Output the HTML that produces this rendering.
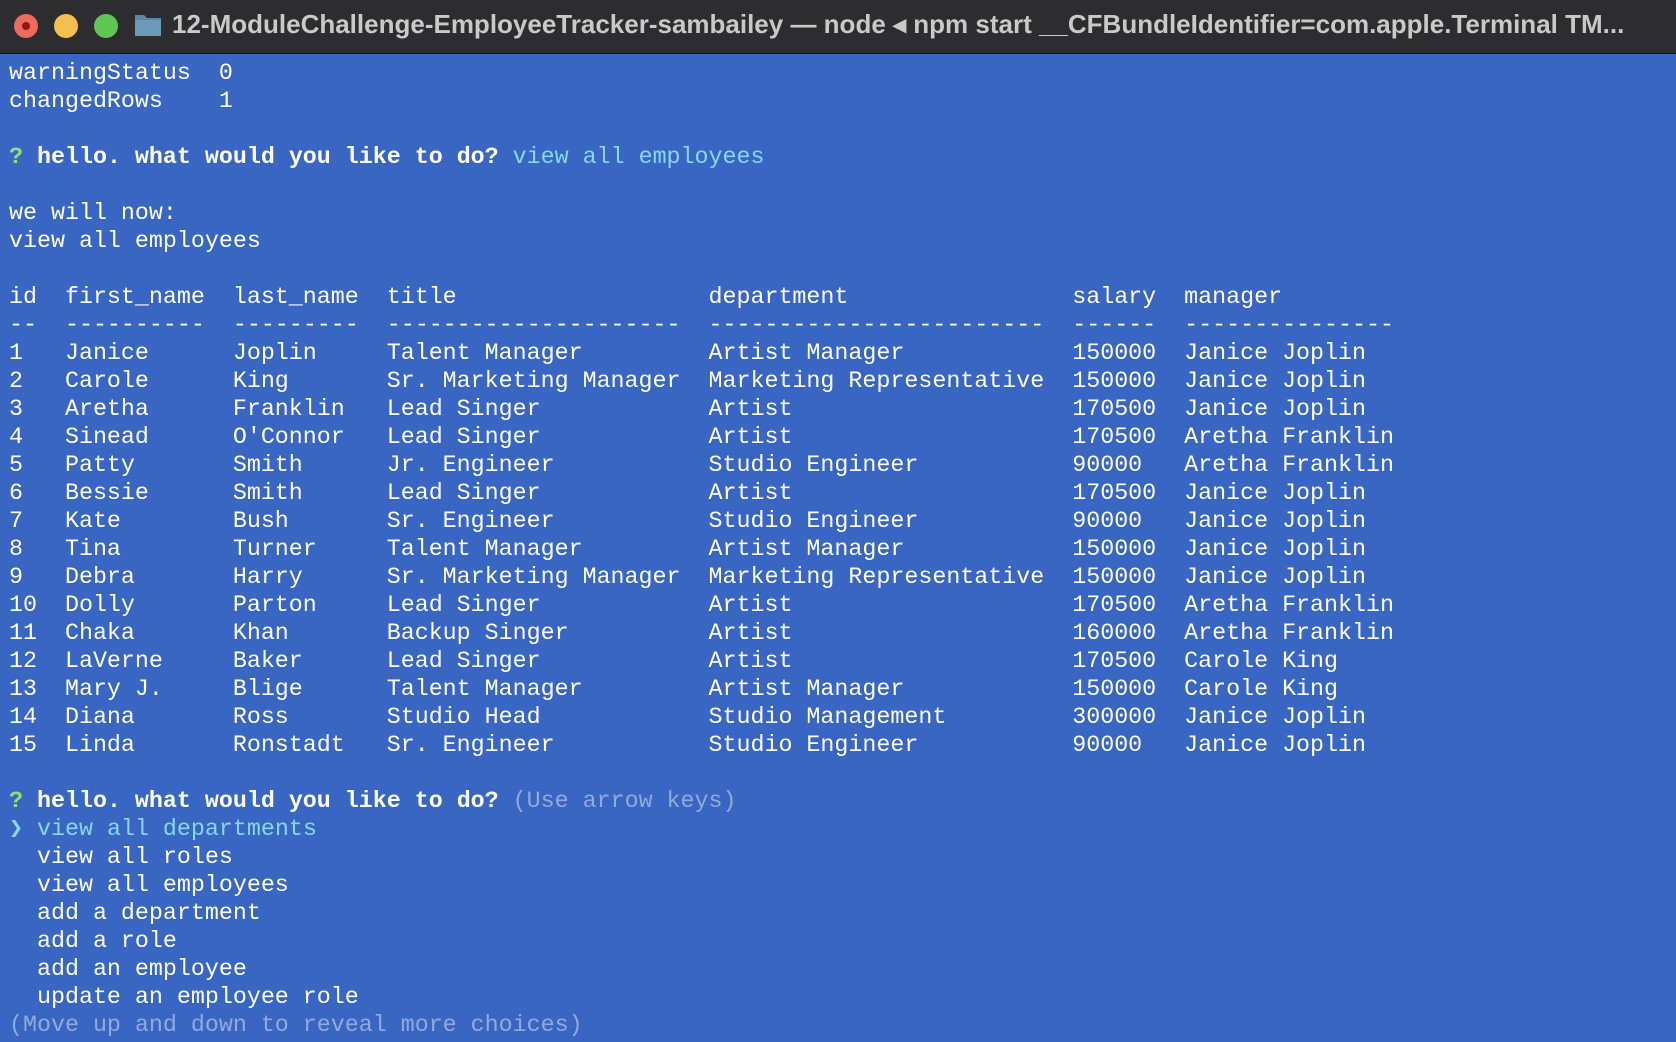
<!DOCTYPE html>
<html><head><meta charset="utf-8"><style>
html,body{margin:0;padding:0;width:1676px;height:1042px;overflow:hidden;background:#3966c3;}
.tb{position:absolute;left:0;top:0;width:1676px;height:53px;background:#2d2c2e;border-bottom:1px solid #111;}
.dot{position:absolute;top:14px;width:24px;height:24px;border-radius:50%;}
.title{position:absolute;left:172px;top:9px;font:bold 26px "Liberation Sans",sans-serif;color:#c9c9c9;white-space:nowrap;}
.folder{position:absolute;left:134px;top:12px;width:28px;height:25px;}
pre{position:absolute;left:9px;top:60px;margin:0;font:23.32px/28px "Liberation Mono","DejaVu Sans Mono",monospace;color:#fff;white-space:pre;}
.b{font-weight:bold}.g{color:#8fe07a}.c{color:#86d8e8}.d{color:#93a9dc}
</style></head><body>
<div class="tb">
<div class="dot" style="left:14px;background:#ec6a5e"><div style="position:absolute;left:8px;top:8px;width:8px;height:8px;border-radius:50%;background:#8c1a10"></div></div>
<div class="dot" style="left:54px;background:#f4bf4f"></div>
<div class="dot" style="left:94px;background:#61c554"></div>
<svg class="folder" viewBox="0 0 28 25"><path d="M1 3h9l3 3h14v18H1z" fill="#5d87a8"/><rect x="1" y="8" width="26" height="16" fill="#6e9ab9"/></svg>
<div class="title">12-ModuleChallenge-EmployeeTracker-sambailey — node ◂ npm start __CFBundleIdentifier=com.apple.Terminal TM...</div>
</div>
<pre>warningStatus  0
changedRows    1

<span class="g b">?</span> <span class="b">hello. what would you like to do?</span> <span class="c">view all employees</span>

we will now:
view all employees

id  first_name  last_name  title                  department                salary  manager
--  ----------  ---------  ---------------------  ------------------------  ------  ---------------
1   Janice      Joplin     Talent Manager         Artist Manager            150000  Janice Joplin
2   Carole      King       Sr. Marketing Manager  Marketing Representative  150000  Janice Joplin
3   Aretha      Franklin   Lead Singer            Artist                    170500  Janice Joplin
4   Sinead      O'Connor   Lead Singer            Artist                    170500  Aretha Franklin
5   Patty       Smith      Jr. Engineer           Studio Engineer           90000   Aretha Franklin
6   Bessie      Smith      Lead Singer            Artist                    170500  Janice Joplin
7   Kate        Bush       Sr. Engineer           Studio Engineer           90000   Janice Joplin
8   Tina        Turner     Talent Manager         Artist Manager            150000  Janice Joplin
9   Debra       Harry      Sr. Marketing Manager  Marketing Representative  150000  Janice Joplin
10  Dolly       Parton     Lead Singer            Artist                    170500  Aretha Franklin
11  Chaka       Khan       Backup Singer          Artist                    160000  Aretha Franklin
12  LaVerne     Baker      Lead Singer            Artist                    170500  Carole King
13  Mary J.     Blige      Talent Manager         Artist Manager            150000  Carole King
14  Diana       Ross       Studio Head            Studio Management         300000  Janice Joplin
15  Linda       Ronstadt   Sr. Engineer           Studio Engineer           90000   Janice Joplin

<span class="g b">?</span> <span class="b">hello. what would you like to do?</span> <span class="d">(Use arrow keys)</span>
<span class="c">❯ view all departments</span>
  view all roles
  view all employees
  add a department
  add a role
  add an employee
  update an employee role
<span class="d">(Move up and down to reveal more choices)</span></pre>
</body></html>
